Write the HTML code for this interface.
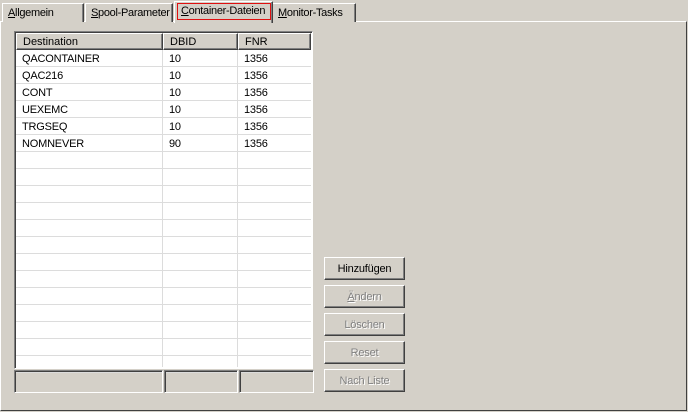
<!DOCTYPE html><html><head><meta charset="utf-8"><style>
*{margin:0;padding:0;box-sizing:border-box}
body{width:688px;height:412px;background:#d4d0c8;font-family:"Liberation Sans",sans-serif;font-size:11px;color:#000;position:relative;overflow:hidden}
.a{position:absolute}
.tab{position:absolute;top:3px;height:19px;border-top:1px solid #fff;border-left:1px solid #fff;border-right:1px solid #404040;box-shadow:inset -1px 0 #808080;padding:3px 0 0 5px;white-space:nowrap;letter-spacing:-0.3px;background:#d4d0c8}
.panel{left:0;top:21px;width:687px;height:390px;border-top:1px solid #fff;border-left:1px solid #fff;border-right:1px solid #404040;border-bottom:1px solid #404040}
.lv{left:14px;top:31px;width:299px;height:338px;background:#fff;border:1px solid #808080;border-right-color:#fff;border-bottom-color:#fff;box-shadow:inset 1px 1px #404040}
.hd{position:absolute;top:33px;height:17px;background:#d4d0c8;border-top:1px solid #fff;border-left:1px solid #fff;border-right:1px solid #404040;border-bottom:1px solid #404040;box-shadow:inset -1px -1px #808080;padding:2px 0 0 6px}
.cell{position:absolute;height:17px;padding:3px 0 0 6px;letter-spacing:-0.2px}
.vl{position:absolute;top:50px;width:1px;height:317px;background:#dcdcdc}
.hl{position:absolute;left:16px;width:295px;height:1px;background:#dcdcdc}
.ft{position:absolute;top:370px;height:23px;border:1px solid #808080;border-right-color:#fff;border-bottom-color:#fff;box-shadow:inset 1px 1px #404040}
.btn{position:absolute;left:324px;width:81px;height:23px;border-top:1px solid #fff;border-left:1px solid #fff;border-right:1px solid #404040;border-bottom:1px solid #404040;box-shadow:inset -1px -1px #808080;text-align:center;padding-top:5px;letter-spacing:-0.2px}
.dis{color:#808080;text-shadow:1px 1px #fff}
</style></head><body>
<div class="a panel"></div>
<div class="tab" style="left:2px;width:82px"><u>A</u>llgemein</div>
<div class="tab" style="left:85px;width:88px"><u>S</u>pool-Parameter</div>
<div class="tab" style="left:272px;width:84px"><u>M</u>onitor-Tasks</div>
<div class="tab" style="left:174px;top:1px;height:22px;width:99px;padding:0;border-bottom:none"></div>
<div class="a" style="left:177px;top:3px;width:94px;height:17px;border:1px solid #e01010;padding:1px 0 0 3px;white-space:nowrap;letter-spacing:-0.3px"><u>C</u>ontainer-Dateien</div>
<div class="a lv"></div>
<div class="hd" style="left:16px;width:147px">Destination</div>
<div class="hd" style="left:163px;width:75px">DBID</div>
<div class="hd" style="left:238px;width:73px">FNR</div>
<div class="vl" style="left:162px"></div><div class="vl" style="left:237px"></div>
<div id="g"></div>
<script>
var d=[["QACONTAINER","10","1356"],["QAC216","10","1356"],["CONT","10","1356"],["UEXEMC","10","1356"],["TRGSEQ","10","1356"],["NOMNEVER","90","1356"]];
var h="";
for(var i=0;i<19;i++){var y=50+i*17;h+='<div class="hl" style="top:'+(y+16)+'px"></div>';
if(d[i]){h+='<div class="cell" style="left:16px;top:'+y+'px">'+d[i][0]+'</div><div class="cell" style="left:163px;top:'+y+'px">'+d[i][1]+'</div><div class="cell" style="left:238px;top:'+y+'px">'+d[i][2]+'</div>';}}
document.getElementById('g').innerHTML=h;
</script>
<div class="ft" style="left:14px;width:149px"></div>
<div class="ft" style="left:164px;width:74px"></div>
<div class="ft" style="left:239px;width:75px"></div>
<div class="btn" style="top:257px">Hinzufügen</div>
<div class="btn dis" style="top:285px"><u>Ä</u>ndern</div>
<div class="btn dis" style="top:313px">Löschen</div>
<div class="btn dis" style="top:341px">Reset</div>
<div class="btn dis" style="top:369px">Nach Liste</div>
</body></html>
